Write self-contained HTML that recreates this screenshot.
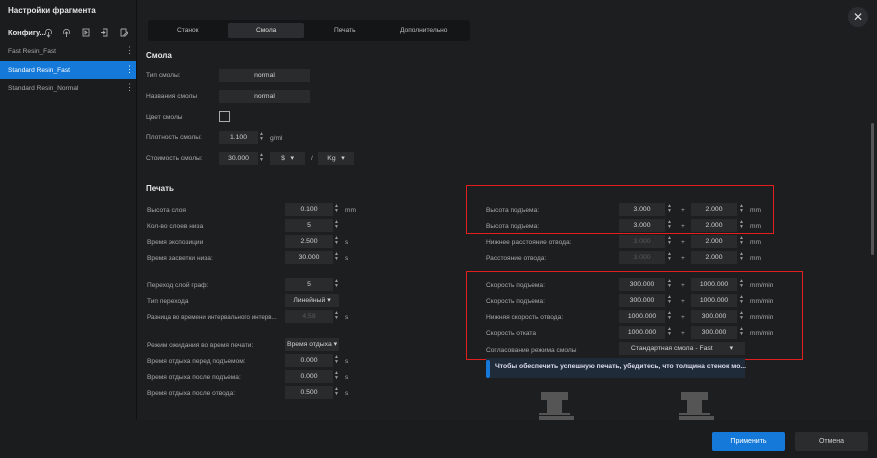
<!DOCTYPE html><html><head><meta charset="utf-8"><style>
*{margin:0;padding:0;box-sizing:border-box}
body{width:877px;height:458px;background:#1d1e20;font-family:"Liberation Sans","Noto Sans CJK SC",sans-serif;color:#c8c8c8;font-size:7px;position:relative;overflow:hidden}
.a{position:absolute;white-space:nowrap}
.lbl{color:#a8a8a8;font-size:6.6px;line-height:9px}
.box{position:absolute;background:#2a2b2d;height:13px;color:#d0d0d0;text-align:center;line-height:13px;font-size:6.8px}
.dis{color:#5a5a5a}
.arr{position:absolute;width:4px;height:11px;color:#999;font-size:5px;line-height:5px;text-align:center}
.h{font-weight:bold;color:#e6e6e6;font-size:8px}
.red{position:absolute;border:1.5px solid #e01f1f}
</style></head><body>
<div class="a" style="left:0;top:0;width:137px;height:420px;background:#1b1c1e;border-right:1px solid #111"></div>
<div class="a h" style="left:8px;top:6px;font-size:8px">Настройки фрагмента</div>
<div class="a h" style="left:8px;top:28px;font-size:7.5px">Конфигу...</div>
<svg class="a" style="left:43px;top:27px" width="85" height="11" fill="none" stroke="#aaa" stroke-width="0.9">
<path d="M3 7 a3 3 0 1 1 5 0 M5.5 5v5 M4 8l1.5 2 1.5-2"/>
<path d="M21 7 a3 3 0 1 1 5 0 M23.5 10V5 M22 6.5l1.5-1.5 1.5 1.5"/>
<rect x="40" y="2" width="6" height="7"/><path d="M42 4l2 1.5-2 1.5z"/>
<path d="M60 2h4v7h-4 M58 5.5h4 M60 4l2 1.5-2 1.5"/>
<path d="M78 2h5v3 M78 2v7h3 M81 8l3-3 1 1-3 3h-1z"/>
</svg>
<div class="a lbl" style="left:8px;top:47px">Fast Resin_Fast</div>
<div class="a" style="left:125px;top:45px;color:#aaa;font-size:9px">⋮</div>
<div class="a" style="left:0;top:61px;width:136px;height:18px;background:#1479d9"></div>
<div class="a lbl" style="left:8px;top:66px;color:#fff">Standard Resin_Fast</div>
<div class="a" style="left:125px;top:64px;color:#fff;font-size:9px">⋮</div>
<div class="a lbl" style="left:8px;top:84px">Standard Resin_Normal</div>
<div class="a" style="left:125px;top:82px;color:#aaa;font-size:9px">⋮</div>
<div class="a" style="left:848px;top:7px;width:20px;height:20px;border-radius:50%;background:#2c2d30;color:#ddd;text-align:center;line-height:20px;font-size:12px">✕</div>
<div class="a" style="left:148px;top:20px;width:322px;height:21px;background:#141517;border-radius:3px"></div>
<div class="a" style="left:228px;top:23px;width:76px;height:15px;background:#2c2d30;border-radius:2px"></div>
<div class="a lbl" style="left:177px;top:26px;color:#bbb">Станок</div>
<div class="a lbl" style="left:256px;top:26px;color:#ddd">Смола</div>
<div class="a lbl" style="left:334px;top:26px;color:#bbb">Печать</div>
<div class="a lbl" style="left:400px;top:26px;color:#bbb">Дополнительно</div>
<div class="a h" style="left:146px;top:51px">Смола</div>
<div class="a lbl" style="left:146px;top:71px">Тип смолы:</div><div class="box" style="left:219px;top:69px;width:91px">normal</div>
<div class="a lbl" style="left:146px;top:92px">Названия смолы</div><div class="box" style="left:219px;top:90px;width:91px">normal</div>
<div class="a lbl" style="left:146px;top:113px">Цвет смолы</div><div class="a" style="left:219px;top:111px;width:11px;height:11px;border:1px solid #aaa"></div>
<div class="a lbl" style="left:146px;top:133px">Плотность смолы:</div><div class="box" style="left:219px;top:131px;width:39px">1.100</div><div class="arr a" style="left:259px;top:132px">▲<br>▼</div><div class="a lbl" style="left:270px;top:134px">g/ml</div>
<div class="a lbl" style="left:146px;top:154px">Стоимость смолы:</div><div class="box" style="left:219px;top:152px;width:39px">30.000</div><div class="arr a" style="left:259px;top:153px">▲<br>▼</div>
<div class="box" style="left:270px;top:152px;width:35px">$ &nbsp; ▾</div><div class="a lbl" style="left:311px;top:154px">/</div><div class="box" style="left:318px;top:152px;width:36px">Kg &nbsp; ▾</div>
<div class="a h" style="left:146px;top:184px">Печать</div>
<div class="a lbl" style="left:147px;top:206px">Высота слоя</div><div class="box" style="left:285px;top:203px;width:48px">0.100</div><div class="arr a" style="left:334px;top:204px">▲<br>▼</div><div class="a lbl" style="left:345px;top:206px">mm</div>
<div class="a lbl" style="left:147px;top:222px">Кол-во слоев низа</div><div class="box" style="left:285px;top:219px;width:48px">5</div><div class="arr a" style="left:334px;top:220px">▲<br>▼</div>
<div class="a lbl" style="left:147px;top:238px">Время экспозиции</div><div class="box" style="left:285px;top:235px;width:48px">2.500</div><div class="arr a" style="left:334px;top:236px">▲<br>▼</div><div class="a lbl" style="left:345px;top:238px">s</div>
<div class="a lbl" style="left:147px;top:254px">Время засветки низа:</div><div class="box" style="left:285px;top:251px;width:48px">30.000</div><div class="arr a" style="left:334px;top:252px">▲<br>▼</div><div class="a lbl" style="left:345px;top:254px">s</div>
<div class="a lbl" style="left:147px;top:281px">Переход слой граф:</div><div class="box" style="left:285px;top:278px;width:48px">5</div><div class="arr a" style="left:334px;top:279px">▲<br>▼</div>
<div class="a lbl" style="left:147px;top:297px">Тип перехода</div><div class="box" style="left:285px;top:294px;width:54px">Линейный ▾</div>
<div class="a lbl" style="left:147px;top:313px;font-size:6.2px">Разница во времени интервального интерв...</div><div class="box dis" style="left:285px;top:310px;width:48px">4.58</div><div class="arr a dis" style="left:334px;top:311px">▲<br>▼</div><div class="a lbl" style="left:345px;top:313px">s</div>
<div class="a lbl" style="left:147px;top:341px">Режим ожидания во время печати:</div><div class="box" style="left:285px;top:338px;width:54px">Время отдыха ▾</div>
<div class="a lbl" style="left:147px;top:357px">Время отдыха перед подъемом:</div><div class="box" style="left:285px;top:354px;width:48px">0.000</div><div class="arr a" style="left:334px;top:355px">▲<br>▼</div><div class="a lbl" style="left:345px;top:357px">s</div>
<div class="a lbl" style="left:147px;top:373px">Время отдыха после подъема:</div><div class="box" style="left:285px;top:370px;width:48px">0.000</div><div class="arr a" style="left:334px;top:371px">▲<br>▼</div><div class="a lbl" style="left:345px;top:373px">s</div>
<div class="a lbl" style="left:147px;top:389px">Время отдыха после отвода:</div><div class="box" style="left:285px;top:386px;width:48px">0.500</div><div class="arr a" style="left:334px;top:387px">▲<br>▼</div><div class="a lbl" style="left:345px;top:389px">s</div>
<div class="red" style="left:466px;top:185px;width:308px;height:49px"></div>
<div class="red" style="left:466px;top:271px;width:337px;height:89px"></div>
<div class="a lbl" style="left:486px;top:206px">Высота подъема:</div><div class="box" style="left:619px;top:203px;width:46px">3.000</div><div class="arr a" style="left:667px;top:204px">▲<br>▼</div><div class="a lbl" style="left:681px;top:206px">+</div><div class="box" style="left:691px;top:203px;width:46px">2.000</div><div class="arr a" style="left:739px;top:204px">▲<br>▼</div><div class="a lbl" style="left:750px;top:206px">mm</div>
<div class="a lbl" style="left:486px;top:222px">Высота подъема:</div><div class="box" style="left:619px;top:219px;width:46px">3.000</div><div class="arr a" style="left:667px;top:220px">▲<br>▼</div><div class="a lbl" style="left:681px;top:222px">+</div><div class="box" style="left:691px;top:219px;width:46px">2.000</div><div class="arr a" style="left:739px;top:220px">▲<br>▼</div><div class="a lbl" style="left:750px;top:222px">mm</div>
<div class="a lbl" style="left:486px;top:238px">Нижнее расстояние отвода:</div><div class="box dis" style="left:619px;top:235px;width:46px">3.000</div><div class="arr a dis" style="left:667px;top:236px">▲<br>▼</div><div class="a lbl" style="left:681px;top:238px">+</div><div class="box" style="left:691px;top:235px;width:46px">2.000</div><div class="arr a" style="left:739px;top:236px">▲<br>▼</div><div class="a lbl" style="left:750px;top:238px">mm</div>
<div class="a lbl" style="left:486px;top:254px">Расстояние отвода:</div><div class="box dis" style="left:619px;top:251px;width:46px">3.000</div><div class="arr a dis" style="left:667px;top:252px">▲<br>▼</div><div class="a lbl" style="left:681px;top:254px">+</div><div class="box" style="left:691px;top:251px;width:46px">2.000</div><div class="arr a" style="left:739px;top:252px">▲<br>▼</div><div class="a lbl" style="left:750px;top:254px">mm</div>
<div class="a lbl" style="left:486px;top:281px">Скорость подъема:</div><div class="box" style="left:619px;top:278px;width:46px">300.000</div><div class="arr a" style="left:667px;top:279px">▲<br>▼</div><div class="a lbl" style="left:681px;top:281px">+</div><div class="box" style="left:691px;top:278px;width:46px">1000.000</div><div class="arr a" style="left:739px;top:279px">▲<br>▼</div><div class="a lbl" style="left:750px;top:281px">mm/min</div>
<div class="a lbl" style="left:486px;top:297px">Скорость подъема:</div><div class="box" style="left:619px;top:294px;width:46px">300.000</div><div class="arr a" style="left:667px;top:295px">▲<br>▼</div><div class="a lbl" style="left:681px;top:297px">+</div><div class="box" style="left:691px;top:294px;width:46px">1000.000</div><div class="arr a" style="left:739px;top:295px">▲<br>▼</div><div class="a lbl" style="left:750px;top:297px">mm/min</div>
<div class="a lbl" style="left:486px;top:313px">Нижняя скорость отвода:</div><div class="box" style="left:619px;top:310px;width:46px">1000.000</div><div class="arr a" style="left:667px;top:311px">▲<br>▼</div><div class="a lbl" style="left:681px;top:313px">+</div><div class="box" style="left:691px;top:310px;width:46px">300.000</div><div class="arr a" style="left:739px;top:311px">▲<br>▼</div><div class="a lbl" style="left:750px;top:313px">mm/min</div>
<div class="a lbl" style="left:486px;top:329px">Скорость отката</div><div class="box" style="left:619px;top:326px;width:46px">1000.000</div><div class="arr a" style="left:667px;top:327px">▲<br>▼</div><div class="a lbl" style="left:681px;top:329px">+</div><div class="box" style="left:691px;top:326px;width:46px">300.000</div><div class="arr a" style="left:739px;top:327px">▲<br>▼</div><div class="a lbl" style="left:750px;top:329px">mm/min</div>
<div class="a lbl" style="left:486px;top:346px">Согласование режима смолы</div><div class="box" style="left:619px;top:342px;width:126px">Стандартная смола - Fast &nbsp;&nbsp;&nbsp;&nbsp;&nbsp;&nbsp;&nbsp;&nbsp;▾</div>
<div class="a" style="left:486px;top:358px;width:259px;height:20px;background:#1f2b38"></div>
<div class="a" style="left:486px;top:360px;width:4px;height:18px;background:#1479d9;border-radius:2px"></div>
<div class="a" style="left:495px;top:363px;font-weight:bold;color:#dde;font-size:6.8px">Чтобы обеспечить успешную печать, убедитесь, что толщина стенок мо...</div>
<svg class="a" style="left:530px;top:390px" width="200" height="30" fill="#555">
<rect x="11" y="2" width="27" height="8"/><rect x="17" y="10" width="15" height="13"/><rect x="9" y="23" width="31" height="2"/><rect x="9" y="26" width="35" height="4"/>
<rect x="151" y="2" width="27" height="8"/><rect x="157" y="10" width="15" height="13"/><rect x="149" y="23" width="31" height="2"/><rect x="149" y="26" width="35" height="4"/>
</svg>
<div class="a" style="left:871px;top:123px;width:3px;height:132px;background:#555;border-radius:2px"></div>
<div class="a" style="left:0;top:420px;width:877px;height:38px;background:#1b1c1e"></div>
<div class="a" style="left:712px;top:432px;width:73px;height:19px;background:#1479d9;border-radius:2px;color:#fff;text-align:center;line-height:19px;font-size:7px">Применить</div>
<div class="a" style="left:795px;top:432px;width:73px;height:19px;background:#2b2c2e;border-radius:2px;color:#ccc;text-align:center;line-height:19px;font-size:7px">Отмена</div>
</body></html>
